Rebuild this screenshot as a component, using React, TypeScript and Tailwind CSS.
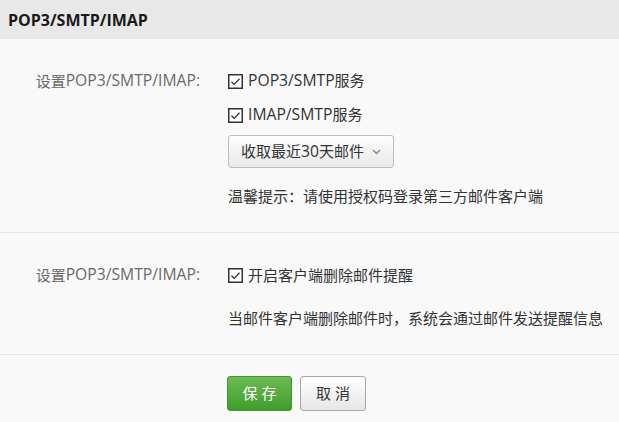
import React from "react";

const font = { fontFamily: '"Open Sans", "Noto Sans CJK SC", sans-serif' };

function L({ children }: { children: React.ReactNode }) {
  return <span className="text-[15.7px]">{children}</span>;
}

function Check() {
  return (
    <svg width="15" height="15" viewBox="0 0 15 15" className="shrink-0">
      <rect x="0.75" y="0.75" width="13.5" height="13.5" fill="#fff" stroke="#333" strokeWidth="1.5" />
      <polyline points="3.5,7.8 6.2,10.4 11.5,4.8" fill="none" stroke="#333" strokeWidth="1.3" />
    </svg>
  );
}

function CheckRow({ children }: { children: React.ReactNode }) {
  return (
    <div className="h-[34px] flex items-center gap-[5px] text-[15px] text-[#333]">
      <Check />
      <span>{children}</span>
    </div>
  );
}

function Label() {
  return (
    <div className="h-[34px] flex items-center justify-end text-[15px] text-[#6a6a6a] whitespace-nowrap">
      设置<L>POP3/SMTP/IMAP:</L>
    </div>
  );
}

export default function App() {
  return (
    <div className="w-[619px] h-[422px] bg-[#f9f9f9] overflow-hidden" style={font}>
      <div className="h-[39px] bg-[#e8e8e8] flex items-center px-2 text-[16px] font-bold text-[#1a1a1a]">
        POP3/SMTP/IMAP
      </div>

      <div className="pt-[25px] pb-[26px] border-b border-[#e6e6e6] grid grid-cols-[200px_1fr] gap-x-[28px]">
        <Label />
        <div className="flex flex-col">
          <CheckRow>
            <L>POP3/SMTP</L>服务
          </CheckRow>
          <CheckRow>
            <L>IMAP/SMTP</L>服务
          </CheckRow>
          <div className="mt-[3px] w-[166px] h-[33px] rounded-[3px] border border-[#bdbdbd] bg-gradient-to-b from-[#fefefe] to-[#e9e9e9] flex items-center justify-between pl-[12px] pr-[12px] text-[15px] text-[#333]">
            <span>
              收取最近<L>30</L>天邮件
            </span>
            <svg width="9" height="6" viewBox="0 0 9 6">
              <polyline points="1,1 4.5,4.5 8,1" fill="none" stroke="#888" strokeWidth="1.5" />
            </svg>
          </div>
          <div className="mt-[18px] h-[20px] flex items-center text-[15px] text-[#333] whitespace-nowrap">
            温馨提示：请使用授权码登录第三方邮件客户端
          </div>
        </div>
      </div>

      <div className="pt-[25px] pb-[26px] border-b border-[#e6e6e6] grid grid-cols-[200px_1fr] gap-x-[28px]">
        <Label />
        <div className="flex flex-col">
          <CheckRow>开启客户端删除邮件提醒</CheckRow>
          <div className="mt-[16px] h-[20px] flex items-center text-[15px] text-[#333] whitespace-nowrap">
            当邮件客户端删除邮件时，系统会通过邮件发送提醒信息
          </div>
        </div>
      </div>

      <div className="pt-[21px] pl-[227px] flex gap-[8px]">
        <button className="w-[65px] h-[35px] rounded-[3px] border border-[#3d9a29] bg-gradient-to-b from-[#6cba52] to-[#3f9d2b] text-white text-[15px] tracking-[4px] pl-[4px]">
          保存
        </button>
        <button className="w-[66px] h-[35px] rounded-[3px] border border-[#a8a8a8] bg-gradient-to-b from-[#ffffff] to-[#e6e6e6] text-[#333] text-[15px] tracking-[4px] pl-[4px]">
          取消
        </button>
      </div>
    </div>
  );
}
